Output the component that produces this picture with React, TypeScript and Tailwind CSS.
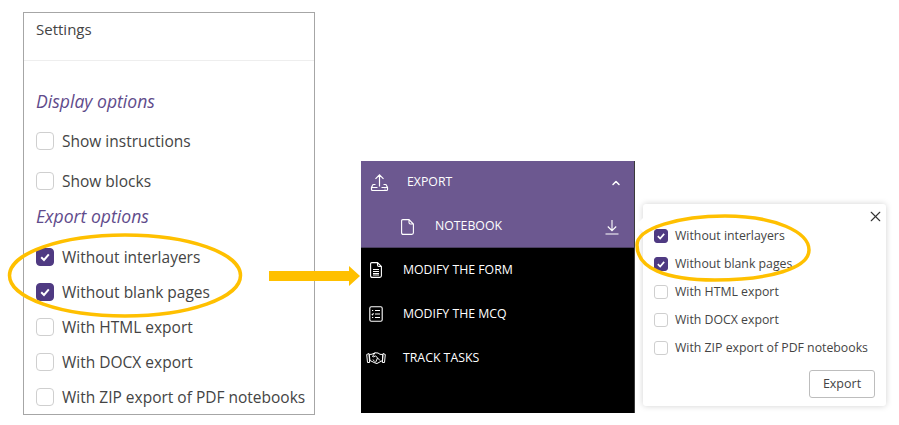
import React from 'react';
import { X, ChevronUp } from 'lucide-react';

const Box = ({ checked, small }: { checked?: boolean; small?: boolean }) => (
  <span
    className={
      'flex shrink-0 items-center justify-center border ' +
      (small ? 'h-[14px] w-[14px] rounded-[3px] ' : 'h-[18px] w-[18px] rounded-[4px] ') +
      (checked ? 'border-[#4f3a82] bg-[#4f3a82]' : 'border-[#cfcfcf] bg-white')
    }
  >
    {checked && (
      <svg viewBox="0 0 12 12" className={small ? 'h-[10px] w-[10px]' : 'h-[12px] w-[12px]'} fill="none" stroke="white" strokeWidth="2">
        <path d="M2.2 6.2 L5 9 L9.8 3.4" />
      </svg>
    )}
  </span>
);

const Opt = ({ label, checked, className }: { label: string; checked?: boolean; className: string }) => (
  <div className={'flex items-center gap-2 text-[15.5px] leading-[22px] text-[#444] ' + className}>
    <Box checked={checked} />
    <span>{label}</span>
  </div>
);

const PopOpt = ({ label, checked }: { label: string; checked?: boolean }) => (
  <div className="flex h-[28px] items-center gap-[7px] text-[12.3px] text-[#444]">
    <Box checked={checked} small />
    <span>{label}</span>
  </div>
);

export default function App() {
  return (
    <div className="relative flex h-[425px] w-[899px] items-start overflow-hidden bg-white font-['Open_Sans',sans-serif]">
      {/* Settings panel */}
      <div className="ml-[23px] mt-[12px] h-[403px] w-[292px] shrink-0 border border-[#a6a6a6]">
        <div className="h-[48px] border-b border-[#eeeeee] pl-[12px] pt-[5px] text-[15px] leading-[22px] text-[#444]">Settings</div>
        <div className="pl-[12px] pt-[27px]">
          <div className="text-[17.6px] italic leading-[26px] text-[#5f4b8b]">Display options</div>
          <Opt label="Show instructions" className="mt-[16px]" />
          <Opt label="Show blocks" className="mt-[18px]" />
          <div className="mt-[11px] text-[17.6px] italic leading-[26px] text-[#5f4b8b]">Export options</div>
          <Opt label="Without interlayers" checked className="mt-[17px]" />
          <Opt label="Without blank pages" checked className="mt-[13px]" />
          <Opt label="With HTML export" className="mt-[13px]" />
          <Opt label="With DOCX export" className="mt-[13px]" />
          <Opt label="With ZIP export of PDF notebooks" className="mt-[13px]" />
        </div>
      </div>

      {/* Side menu */}
      <div className="ml-[46px] mt-[161px] h-[252px] w-[274px] shrink-0 border-r-[1.5px] border-[#3a3a3a] bg-black text-[12.3px] text-white">
        <div className="h-[87px] border-b border-[#4a3f60] bg-[#6c5890]">
          <div className="flex h-[43px] items-center pl-[9px] pr-[12px]">
            <svg viewBox="0 0 19 19" className="h-[19px] w-[19px]" fill="none" stroke="white" strokeWidth="1.2">
              <path d="M9.500 13.500V2M5.500 5.800 9.500 1.800 13.500 5.800M5.500 11.500H3.500Q2.800 11.500 2.600 12.200L1.500 14.500V16.500Q1.500 17.500 2.500 17.500H16.500Q17.500 17.500 17.500 16.500V14.500L16.400 12.200Q16.200 11.500 15.500 11.500H13.500M1.500 14.500H7.500M11.500 14.500H17.500" />
              <circle cx="15" cy="16" r="0.6" fill="white" stroke="none" />
            </svg>
            <span className="ml-[18px]">EXPORT</span>
            <ChevronUp size={12} strokeWidth={3} className="ml-auto" />
          </div>
          <div className="flex h-[43px] items-center pl-[40px] pr-[15px] pt-[2px]">
            <svg viewBox="0 0 13 16" className="h-[16px] w-[13px]" fill="none" stroke="white" strokeWidth="1.1">
              <path d="M1.800 0.600H8L12.400 5V13.800Q12.400 15.400 10.800 15.400H2.200Q0.600 15.400 0.600 13.800V1.800Q0.600 0.600 1.800 0.600ZM8 0.600V3.500Q8 5 9.500 5H12.400" />
            </svg>
            <span className="ml-[21px]">NOTEBOOK</span>
            <svg viewBox="0 0 14 16" className="ml-auto h-[16px] w-[14px]" fill="none" stroke="white" strokeWidth="1.1">
              <path d="M7 1V11.500M2.800 7.500 7 11.700 11.200 7.500M0.500 15H13.500" />
            </svg>
          </div>
        </div>
        <div className="flex h-[44px] items-center pl-[9px]">
          <svg viewBox="0 0 12 16" className="h-[16px] w-[12px]" fill="none" stroke="white" strokeWidth="1.1">
            <path d="M1.800 0.600H7.500L11.400 4.500V13.800Q11.400 15.400 9.800 15.400H2.200Q0.600 15.400 0.600 13.800V1.800Q0.600 0.600 1.800 0.600ZM7.500 0.600V3Q7.500 4.500 9 4.500H11.400" />
            <path d="M3 7.500H9M3 9.500H9M3 11.500H9M3 13H9" strokeWidth="1" />
          </svg>
          <span className="ml-[21px] font-medium">MODIFY THE FORM</span>
        </div>
        <div className="flex h-[44px] items-center pl-[8px]">
          <svg viewBox="0 0 14 16" className="h-[16px] w-[14px]" fill="none" stroke="white" strokeWidth="1.1">
            <rect x="0.800" y="0.800" width="12.400" height="14.400" rx="1.500" />
            <path d="M6 4.500H11M6 8H11M6 11.500H11M3 4.500H4.200M2.800 8 3.500 8.800 4.500 7.200M3 11.500H4.200" />
          </svg>
          <span className="ml-[20px] font-medium">MODIFY THE MCQ</span>
        </div>
        <div className="flex h-[44px] items-center pl-[5px]">
          <svg viewBox="0 0 20 12" className="h-[12px] w-[20px]" fill="none" stroke="white" strokeWidth="1">
            <path d="M3 1.500 0.700 2.500 1.500 10.500 3.600 10.500ZM17 1.500 19.300 2.500 18.500 10.500 16.400 10.500Z" />
            <path d="M3.200 2.500 6 2.200 9 0.800 12 1 14 2.300 16.800 2.500 16.500 8.500 11 11.500 9.500 11.200 4 8.500ZM9 0.800 6.500 4.500Q7.500 5.500 9.500 3.800L14 8.500M11.500 6 9.500 10.500M7 7.500 8.500 9.500" />
          </svg>
          <span className="ml-[17px] font-medium">TRACK TASKS</span>
        </div>
      </div>

      {/* Export popup */}
      <div className="relative ml-[8px] mt-[204px] h-[202px] w-[243px] shrink-0 rounded-[3px] bg-white pl-[11px] pt-[18px] shadow-[0_0_6px_rgba(0,0,0,0.18)]">
        <span className="absolute left-[-5px] top-[16px] h-[10px] w-[10px] rotate-45 bg-white" />
        <X size={17} strokeWidth={1.6} className="absolute right-[2.500px] top-[3.500px] text-[#333]" />
        <PopOpt label="Without interlayers" checked />
        <PopOpt label="Without blank pages" checked />
        <PopOpt label="With HTML export" />
        <PopOpt label="With DOCX export" />
        <PopOpt label="With ZIP export of PDF notebooks" />
        <div className="flex justify-end pr-[11px] pt-[8px]">
          <button className="h-[28px] w-[66px] rounded-[3px] border border-[#bdbdbd] bg-white text-[12.5px] text-[#444]">Export</button>
        </div>
      </div>

      {/* Yellow annotations */}
      <svg className="pointer-events-none absolute left-0 top-0 h-[425px] w-[899px]" viewBox="0 0 899 425" fill="none">
        <ellipse cx="125" cy="275.500" rx="115.500" ry="40.500" stroke="#FFC000" strokeWidth="3.500" />
        <path d="M637 245C637 228 680 216 725 216C775 216 809 232 809 250C809 268 770 280 715 280C665 280 637 268 637 245Z" stroke="#FFC000" strokeWidth="3.500" />
        <path d="M269 271H349V266L360 276 349 286V281H269Z" fill="#FFC000" />
      </svg>
    </div>
  );
}
